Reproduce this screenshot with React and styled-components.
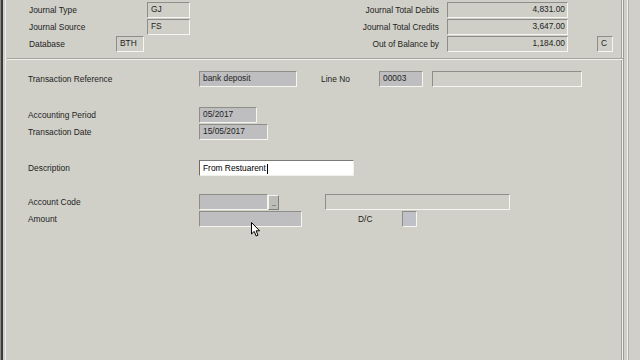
import styled, { createGlobalStyle } from 'styled-components';

const GlobalStyle = createGlobalStyle`
  html, body { margin: 0; padding: 0; background: #d0d0c8; }
  body { font-family: "Liberation Sans", Arial, sans-serif; }
`;

const Window = styled.div`
  position: relative;
  width: 640px;
  height: 360px;
  overflow: hidden;
  display: flex;
  background: #d0d0c8;
  color: #1e1e1e;
  font-size: 8.4px;
`;

const Frame = styled.div`
  width: 623px;
  height: 100%;
  box-shadow: inset 1px 0 0 #8e8e88, inset 3px 0 0 #3c3c3c, inset 5px 0 0 #cfcfc7,
    inset 6px 0 0 #efefe9, inset -1px 0 0 #f2f2ec, inset -2px 0 0 #a2a29a;
`;

const RightEdge = styled.div`
  flex: 1;
  box-shadow: inset 1px 0 0 #9c9c94, inset 4px 0 0 #d0d0c8, inset 5px 0 0 #f0f0ea,
    inset 6px 0 0 #b0b0a8;
`;

const Header = styled.div`
  padding: 1px 0 0 29px;
  height: 58px;
  box-sizing: border-box;
  display: flex;
  flex-direction: column;
`;

const HeaderRow = styled.div`
  display: grid;
  grid-template-columns: 161px 1fr 121px 45px;
  width: 584px;
  height: 17px;
  align-items: center;
`;

const Cell = styled.div`
  display: flex;
  align-items: center;
`;

const TotalLabel = styled.span`
  text-align: right;
  padding-right: 8px;
  white-space: nowrap;
`;

const Label = styled.span`
  width: ${(p) => p.$w}px;
  flex: none;
  white-space: nowrap;
  margin-left: ${(p) => p.$ml || 0}px;
`;

const fills = {
  flat: '#cfcfc7',
  gray: '#bebec0',
  blue: '#c0c0c8',
  white: '#ffffff',
};

const Field = styled.div`
  box-sizing: border-box;
  flex: none;
  width: ${(p) => p.$w}px;
  height: ${(p) => p.$h || 16}px;
  margin-left: ${(p) => p.$ml || 0}px;
  background: ${(p) => fills[p.$tone || 'flat']};
  border: 1px solid;
  border-color: #8e8e88 #f6f6f0 #f6f6f0 #8e8e88;
  padding: 1px ${(p) => (p.$right ? 2 : 3)}px 0 3px;
  line-height: 11px;
  text-align: ${(p) => (p.$right ? 'right' : 'left')};
  white-space: nowrap;
  overflow: hidden;
  justify-self: ${(p) => (p.$end ? 'end' : 'auto')};
  ${(p) =>
    p.$tone === 'white' &&
    'border-color: #7a7a76 #f0f0ea #f0f0ea #6a6a66; color: #000; display: flex; align-items: center;'}
`;

const Caret = styled.span`
  display: inline-block;
  width: 1px;
  height: 10px;
  background: #000;
  margin-left: 1px;
`;

const EllipsisButton = styled.div`
  box-sizing: border-box;
  width: 11px;
  height: 15px;
  background: #bcbcb8;
  border: 1px solid;
  border-color: #f4f4ee #808078 #808078 #f4f4ee;
  font-size: 8px;
  line-height: 8px;
  letter-spacing: -1px;
  display: flex;
  align-items: flex-end;
  justify-content: center;
  color: #444;
  padding-bottom: 1px;
`;

const Divider = styled.div`
  margin-left: 7px;
  height: 1px;
  width: 616px;
  background: #a4a49c;
  border-bottom: 1px solid #f2f2ec;
`;

const Body = styled.div`
  padding: 11px 0 0 28px;
  display: flex;
  flex-direction: column;
`;

const Row = styled.div`
  display: flex;
  align-items: center;
  height: 16px;
  margin-top: ${(p) => p.$mt || 0}px;
`;

const Pointer = styled.svg`
  position: absolute;
  left: 251px;
  top: 222px;
  width: 10px;
  height: 15px;
`;

const HeaderField = ({ children, ...rest }) => (
  <Field $w={121} $right {...rest}>
    {children}
  </Field>
);

export default function App() {
  return (
    <>
      <GlobalStyle />
      <Window>
        <Frame>
          <Header>
            <HeaderRow>
              <Cell>
                <Label $w={118}>Journal Type</Label>
                <Field $w={43}>GJ</Field>
              </Cell>
              <TotalLabel>Journal Total Debits</TotalLabel>
              <HeaderField>4,831.00</HeaderField>
              <span />
            </HeaderRow>
            <HeaderRow>
              <Cell>
                <Label $w={118}>Journal Source</Label>
                <Field $w={43}>FS</Field>
              </Cell>
              <TotalLabel>Journal Total Credits</TotalLabel>
              <HeaderField>3,647.00</HeaderField>
              <span />
            </HeaderRow>
            <HeaderRow>
              <Cell>
                <Label $w={87}>Database</Label>
                <Field $w={28}>BTH</Field>
              </Cell>
              <TotalLabel>Out of Balance by</TotalLabel>
              <HeaderField>1,184.00</HeaderField>
              <Field $w={16} $end>C</Field>
            </HeaderRow>
          </Header>
          <Divider />
          <Body>
            <Row>
              <Label $w={171}>Transaction Reference</Label>
              <Field $w={98} $tone="gray">bank deposit</Field>
              <Label $w={58} $ml={24}>Line No</Label>
              <Field $w={44} $tone="gray">00003</Field>
              <Field $w={150} $ml={9} />
            </Row>
            <Row $mt={20}>
              <Label $w={171}>Accounting Period</Label>
              <Field $w={58} $tone="gray">05/2017</Field>
            </Row>
            <Row $mt={1}>
              <Label $w={171}>Transaction Date</Label>
              <Field $w={69} $tone="gray">15/05/2017</Field>
            </Row>
            <Row $mt={20}>
              <Label $w={171}>Description</Label>
              <Field $w={155} $tone="white">
                From Restuarent
                <Caret />
              </Field>
            </Row>
            <Row $mt={18}>
              <Label $w={171}>Account Code</Label>
              <Field $w={69} $tone="gray" />
              <EllipsisButton>...</EllipsisButton>
              <Field $w={185} $ml={46} />
            </Row>
            <Row $mt={1}>
              <Label $w={171}>Amount</Label>
              <Field $w={103} $tone="gray" />
              <Label $w={44} $ml={56}>D/C</Label>
              <Field $w={15} $tone="blue" />
            </Row>
          </Body>
        </Frame>
        <RightEdge />
        <Pointer viewBox="0 0 10 15">
          <path
            d="M0.5 0.5 L0.5 12 L3.2 9.4 L5.2 14 L7 13.2 L5.1 8.8 L8.6 8.8 Z"
            fill="#fff"
            stroke="#000"
            strokeWidth="1"
            strokeLinejoin="miter"
          />
        </Pointer>
      </Window>
    </>
  );
}
